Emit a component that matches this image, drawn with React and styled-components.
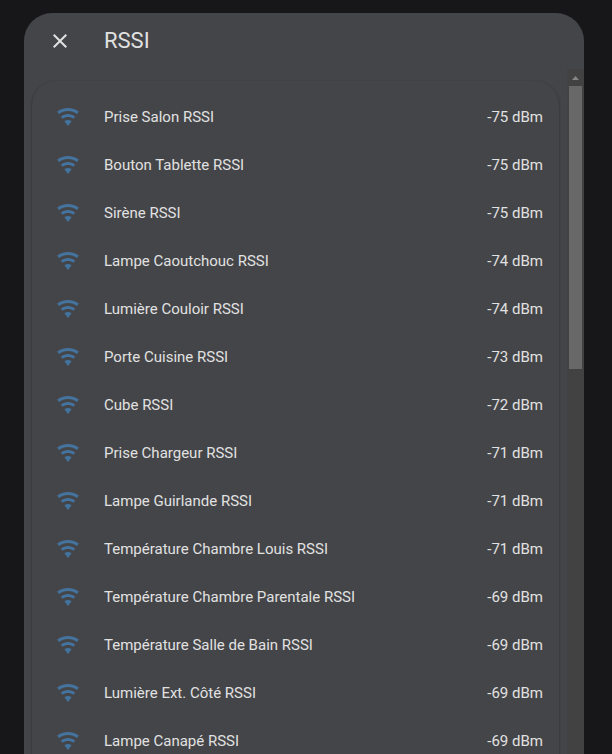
import { useState } from 'react';
import { styled, createGlobalStyle } from 'styled-components';

const GlobalStyle = createGlobalStyle`
  * {
    box-sizing: border-box;
  }

  body {
    margin: 0;
    background-color: #171719;
    color: #e1e1e1;
    font-family: Roboto, 'Noto Sans', sans-serif;
    font-size: 15px;
    line-height: 20px;
  }
`;

const Overlay = styled.div`
  display: flex;
  height: 100vh;
  padding: 13px 28px 0 24px;
`;

const Dialog = styled.section`
  display: flex;
  flex: 1;
  flex-direction: column;
  min-width: 0;
  overflow: hidden;
  border-radius: 28px 28px 0 0;
  background-color: #444548;
`;

const Header = styled.header`
  display: flex;
  flex: none;
  align-items: center;
  gap: 20px;
  height: 56px;
  padding: 0 12px;
`;

const CloseButton = styled.button`
  display: flex;
  padding: 12px;
  border: none;
  border-radius: 50%;
  background: none;
  color: inherit;
  cursor: pointer;

  &:hover {
    background-color: rgba(255, 255, 255, 0.08);
  }
`;

const Title = styled.h1`
  margin: 0;
  font-size: 22px;
  font-weight: 400;
  line-height: 28px;
`;

const Body = styled.div`
  display: flex;
  flex: 1;
  min-height: 0;
`;

const Content = styled.div`
  flex: 1;
  min-width: 0;
  padding: 12px 8px 0;
  overflow-y: auto;
  scrollbar-width: none;
`;

const Card = styled.ul`
  display: flex;
  flex-direction: column;
  gap: 8px;
  margin: 0;
  padding: 16px;
  border-radius: 24px;
  box-shadow:
    0 2px 1px -1px rgba(0, 0, 0, 0.2),
    0 1px 1px 0 rgba(0, 0, 0, 0.14),
    0 1px 3px 0 rgba(0, 0, 0, 0.3);
  background-color: #444548;
  list-style: none;
`;

const Row = styled.li`
  display: flex;
  align-items: center;
  height: 40px;
`;

const IconCell = styled.span`
  display: flex;
  flex: none;
  justify-content: center;
  width: 40px;
  color: #44739e;
`;

const Name = styled.span`
  flex: 1;
  min-width: 0;
  margin: 0 8px 0 16px;
  overflow: hidden;
  text-overflow: ellipsis;
  white-space: nowrap;
`;

const Value = styled.span`
  flex: none;
`;

const ScrollBar = styled.div`
  display: flex;
  flex: none;
  flex-direction: column;
  align-items: center;
  width: 17px;
  background-color: #424242;
`;

const ScrollArrow = styled.div`
  display: flex;
  align-items: center;
  height: 17px;
  color: #868686;
`;

const ScrollThumb = styled.div`
  width: 13px;
  height: 283px;
  background-color: #686868;
`;

const sensors = [
  { name: 'Prise Salon RSSI', value: -75 },
  { name: 'Bouton Tablette RSSI', value: -75 },
  { name: 'Sirène RSSI', value: -75 },
  { name: 'Lampe Caoutchouc RSSI', value: -74 },
  { name: 'Lumière Couloir RSSI', value: -74 },
  { name: 'Porte Cuisine RSSI', value: -73 },
  { name: 'Cube RSSI', value: -72 },
  { name: 'Prise Chargeur RSSI', value: -71 },
  { name: 'Lampe Guirlande RSSI', value: -71 },
  { name: 'Température Chambre Louis RSSI', value: -71 },
  { name: 'Température Chambre Parentale RSSI', value: -69 },
  { name: 'Température Salle de Bain RSSI', value: -69 },
  { name: 'Lumière Ext. Côté RSSI', value: -69 },
  { name: 'Lampe Canapé RSSI', value: -69 },
];

const CloseIcon = () => (
  <svg width="24" height="24" viewBox="0 0 24 24" fill="currentColor">
    <path d="M19,6.41L17.59,5L12,10.59L6.41,5L5,6.41L10.59,12L5,17.59L6.41,19L12,13.41L17.59,19L19,17.59L13.41,12L19,6.41Z" />
  </svg>
);

const WifiIcon = () => (
  <svg width="24" height="24" viewBox="0 0 24 24" fill="currentColor">
    <path d="M12,21L15.6,16.2C14.6,15.45 13.35,15 12,15C10.65,15 9.4,15.45 8.4,16.2L12,21M12,3C7.95,3 4.21,4.34 1.2,6.6L3,9C5.5,7.12 8.62,6 12,6C15.38,6 18.5,7.12 21,9L22.8,6.6C19.79,4.34 16.05,3 12,3M12,9C9.3,9 6.81,9.89 4.8,11.4L6.6,13.8C8.1,12.67 9.97,12 12,12C14.03,12 15.9,12.67 17.4,13.8L19.2,11.4C17.19,9.89 14.7,9 12,9Z" />
  </svg>
);

const App = () => {
  const [open, setOpen] = useState(true);

  return (
    <>
      <GlobalStyle />
      {open && (
        <Overlay>
          <Dialog role="dialog" aria-labelledby="dialog-title">
            <Header>
              <CloseButton aria-label="Fermer" onClick={() => setOpen(false)}>
                <CloseIcon />
              </CloseButton>
              <Title id="dialog-title">RSSI</Title>
            </Header>
            <Body>
              <Content>
                <Card>
                  {sensors.map(({ name, value }) => (
                    <Row key={name}>
                      <IconCell>
                        <WifiIcon />
                      </IconCell>
                      <Name>{name}</Name>
                      <Value>{value} dBm</Value>
                    </Row>
                  ))}
                </Card>
              </Content>
              <ScrollBar aria-hidden="true">
                <ScrollArrow>
                  <svg width="7" height="4" viewBox="0 0 7 4" fill="currentColor">
                    <path d="M3.5 0L7 4H0Z" />
                  </svg>
                </ScrollArrow>
                <ScrollThumb />
              </ScrollBar>
            </Body>
          </Dialog>
        </Overlay>
      )}
    </>
  );
};

export default App;
